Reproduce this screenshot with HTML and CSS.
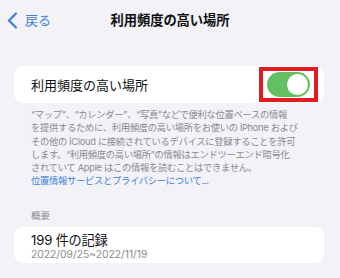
FILE: index.html
```html
<!DOCTYPE html>
<html lang="ja">
<head>
<meta charset="utf-8">
<link rel="stylesheet" href="styles.css">
</head>
<body>
<div class="screen">
  <div class="nav">
    <div class="back">
      <svg class="chev" width="11" height="17" viewBox="0 0 11 17"><polyline points="9,1.5 2,8.5 9,15.5" fill="none" stroke="#3f7fd9" stroke-width="2.2" stroke-linecap="round" stroke-linejoin="round"/></svg>
      <span class="back-label">戻る</span>
    </div>
    <div class="title">利用頻度の高い場所</div>
    <div></div>
  </div>

  <div class="card toggle-card">
    <span class="label">利用頻度の高い場所</span>
    <div class="highlight">
      <div class="switch"><div class="knob"></div></div>
    </div>
  </div>

  <p class="footer">“マップ”、“カレンダー”、“写真”などで便利な位置ベースの情報<br>を提供するために、利用頻度の高い場所をお使いの iPhone および<br>その他の iCloud に接続されているデバイスに登録することを許可<br>します。“利用頻度の高い場所”の情報はエンドツーエンド暗号化<br>されていて Apple はこの情報を読むことはできません。<br><span class="link">位置情報サービスとプライバシーについて...</span></p>

  <div class="section-head">概要</div>
  <div class="card summary">
    <div class="count">199 件の記録</div>
    <div class="dates">2022/09/25~2022/11/19</div>
  </div>
</div>
</body>
</html>
```

FILE: styles.css
```css
* { box-sizing: border-box; }
html, body { margin: 0; padding: 0; }
body {
  background: #f2f2f7;
  font-family: Inter, "Noto Sans CJK JP", sans-serif;
  color: #111;
}
.screen {
  width: 340px;
  height: 278px;
  overflow: hidden;
}
.nav {
  height: 40px;
  display: grid;
  grid-template-columns: 1fr auto 1fr;
  align-items: center;
}
.back {
  display: flex;
  align-items: center;
  padding-left: 7px;
  gap: 7px;
}
.chev { display: block; }
.back-label {
  color: #3f7fd9;
  font-size: 13px;
  line-height: 16px;
}
.title {
  font-size: 13.3px;
  font-weight: 700;
  line-height: 16px;
  letter-spacing: -0.1px;
}
.card {
  background: #fff;
  border-radius: 9px;
  margin: 0 16px 0 14px;
}
.toggle-card {
  margin-top: 26px;
  height: 37px;
  display: flex;
  align-items: center;
  justify-content: space-between;
  padding: 0 6px 0 17px;
}
.label {
  font-size: 13px;
  line-height: 16px;
}
.highlight {
  border: 4px solid #e31b23;
  height: 35px;
  width: 59px;
  display: flex;
  align-items: center;
  padding-left: 4px;
}
.switch {
  width: 43px;
  height: 25px;
  border-radius: 13px;
  background: #62c061;
  position: relative;
}
.knob {
  position: absolute;
  right: 2px;
  top: 2px;
  width: 21px;
  height: 21px;
  border-radius: 50%;
  background: #fff;
}
.footer {
  margin: 5px 0 0 0;
  padding-left: 31px;
  font-size: 9.3px;
  line-height: 13.3px;
  letter-spacing: -0.3px;
  color: #8a8a8e;
  white-space: nowrap;
}
.link { color: #3f7fd9; }
.section-head {
  margin-top: 21px;
  padding-left: 31px;
  font-size: 9.5px;
  line-height: 13px;
  color: #8a8a8e;
}
.summary {
  margin-top: 5px;
  height: 36px;
  padding: 6px 0 0 17px;
}
.count {
  font-size: 13.2px;
  line-height: 15px;
  letter-spacing: -0.2px;
}
.dates {
  font-size: 10.3px;
  line-height: 12px;
  color: #8a8a8e;
}
```
